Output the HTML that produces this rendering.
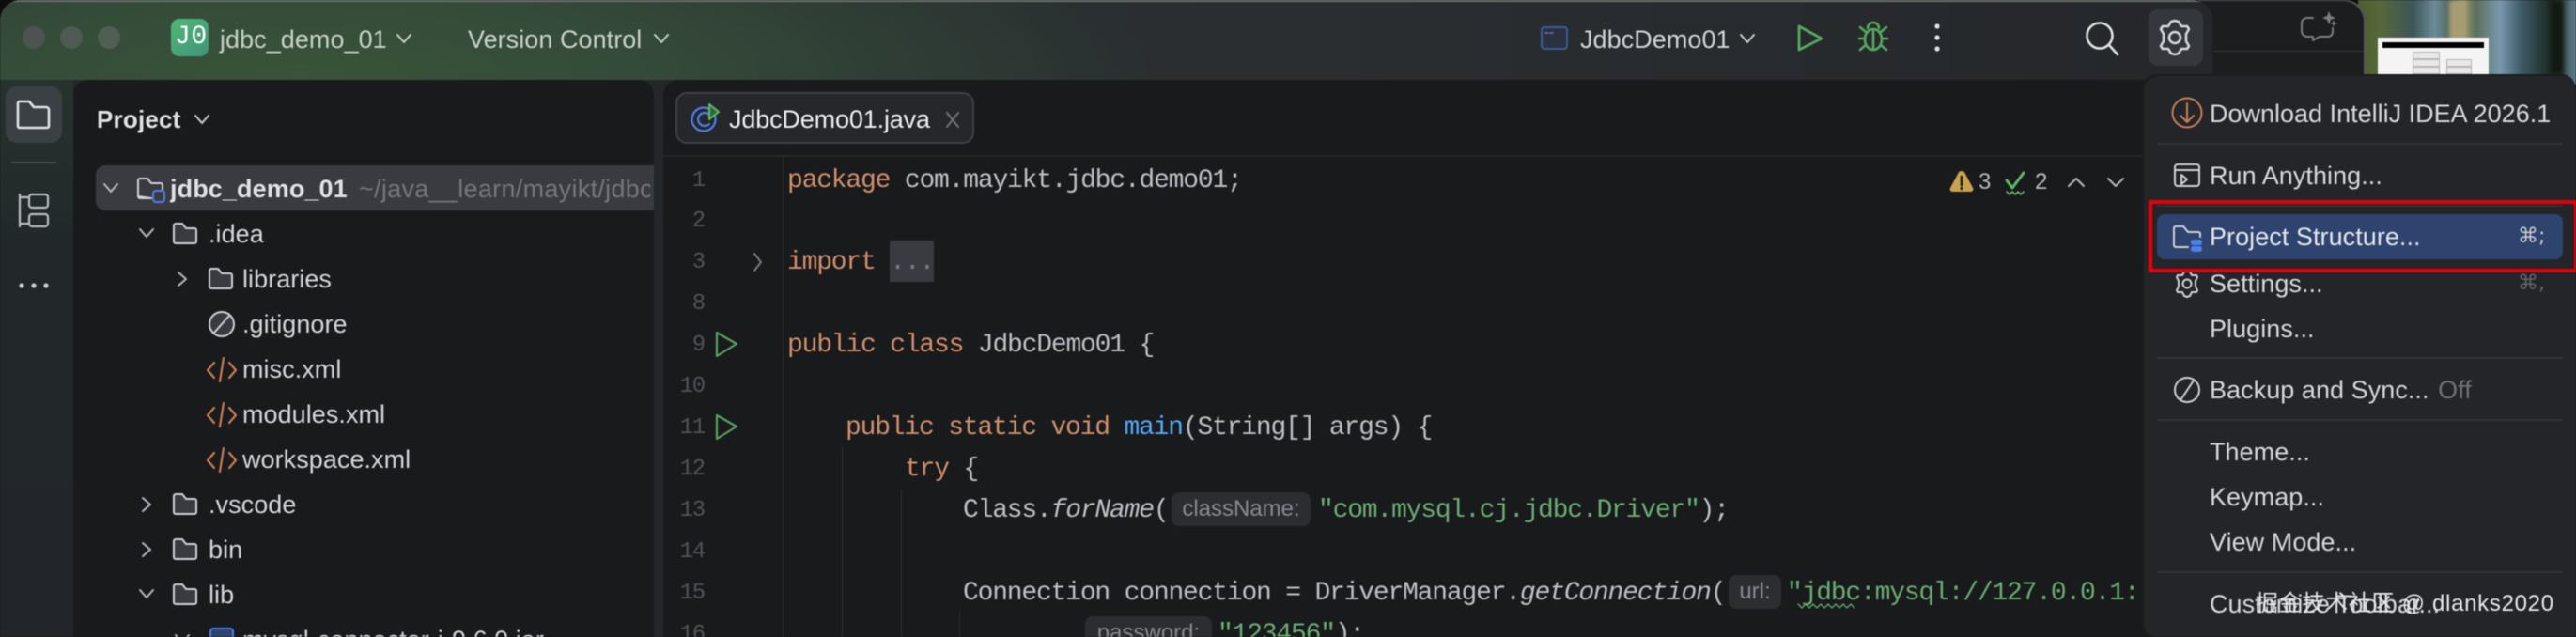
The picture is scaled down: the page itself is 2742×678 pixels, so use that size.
<!DOCTYPE html>
<html><head><meta charset="utf-8">
<style>
html,body{margin:0;padding:0;background:#0c0d0d;width:2742px;height:678px;overflow:hidden}
#r{position:relative;width:2742px;height:678px;overflow:hidden;filter:blur(.5px);font-family:"Liberation Sans","Noto Sans CJK SC",sans-serif}
#r div{position:absolute}
.t{white-space:nowrap;font-size:27px;line-height:40px;height:40px;letter-spacing:.05px;color:#d3d5da}
.m{white-space:pre;font-family:"Liberation Mono",monospace;font-size:28px;letter-spacing:-1.2px;line-height:40px;height:40px;color:#bcbec4;margin-top:1px}
.n{font-family:"Liberation Mono",monospace;font-size:24px;letter-spacing:-1.2px;line-height:40px;height:40px;color:#4f5257;width:60px;left:690px;text-align:right;margin-top:1px}
.k{color:#cf8e6d}.s{color:#6aab73}.f{color:#56a8f5}
.i{font-style:italic}
.h{background:#2b2d30;border-radius:8px;height:36px;color:#868a91;font-size:24px;line-height:36px;text-align:center;white-space:nowrap}
.sep{background:#303236;height:2px;left:2296px;width:432px}
svg{position:absolute;left:0;top:0}
</style></head><body><div id="r">
<!-- photo background -->
<div style="left:2510px;top:0;width:232px;height:90px;overflow:hidden;background:linear-gradient(90deg,#4d5c30 0,#56683a 10%,#3d5558 25%,#6d8a98 35%,#4f6a60 42%,#a09a70 48%,#5b6f5c 54%,#7a98ac 65%,#3f5a68 75%,#1d2b22 88%,#5d7c8c 100%)"></div>
<div style="left:2607px;top:0;width:18px;height:80px;background:#a89c72;filter:blur(2px)"></div>
<div style="left:2715px;top:0;width:14px;height:80px;background:#131a14;filter:blur(2px)"></div>
<!-- window behind -->
<div style="left:2340px;top:0;width:178px;height:90px;background:#1c1d1f;border-top-right-radius:22px;box-shadow:inset -2px 1px 0 #55575a"></div>
<div style="left:2356px;top:54px;width:160px;height:1px;background:#35373a"></div>
<!-- thumbnail -->
<div style="left:2531px;top:40px;width:118px;height:42px;background:#f4f4f4"></div>
<div style="left:2536px;top:45px;width:108px;height:6px;background:#000"></div>
<div style="left:2568px;top:55px;width:27px;height:6px;background:#e8e8e8;border:1px solid #b5b5b5"></div>
<div style="left:2568px;top:63px;width:27px;height:6px;background:#e8e8e8;border:1px solid #b5b5b5"></div>
<div style="left:2604px;top:63px;width:25px;height:6px;background:#e8e8e8;border:1px solid #b5b5b5"></div>
<div style="left:2568px;top:71px;width:27px;height:6px;background:#e8e8e8;border:1px solid #b5b5b5"></div>
<div style="left:2604px;top:71px;width:25px;height:6px;background:#e8e8e8;border:1px solid #b5b5b5"></div>
<!-- IDE window -->
<div style="left:0;top:0;width:2355px;height:678px;border-radius:22px 22px 0 0;background:#24272a;overflow:hidden;box-shadow:inset -2px 0 0 #46484b">
<div style="left:0;top:0;width:2355px;height:85px;background:radial-gradient(ellipse 900px 220px at 320px 80px,#395439 0,#354b39 40%,#2f3d35 72%,rgba(42,46,48,0) 100%),linear-gradient(90deg,#2a3331 0,#2a2e31 60%,#25272b 100%)"></div>
<div style="left:0;top:85px;width:78px;height:593px;background:linear-gradient(180deg,#27332e 0,#22282a 30%,#22262a 100%)"></div>
<div style="left:0;top:0;width:2355px;height:2px;background:#6b746d"></div>
</div>
<!-- traffic lights -->
<div style="left:24px;top:28px;width:24px;height:24px;border-radius:50%;background:#4c5351"></div>
<div style="left:64px;top:28px;width:24px;height:24px;border-radius:50%;background:#4e5a52"></div>
<div style="left:104px;top:28px;width:24px;height:24px;border-radius:50%;background:#4f5f54"></div>
<!-- project icon -->
<div style="left:182px;top:20px;width:40px;height:40px;border-radius:9px;background:linear-gradient(135deg,#52b678,#3f9478)"></div>
<div class="m" style="left:186px;top:19px;color:#fff;font-size:28px;letter-spacing:.6px;line-height:40px">J0</div>
<div class="t" style="left:234px;top:22px;color:#c6d0c7">jdbc_demo_01</div>
<div class="t" style="left:498px;top:22px;color:#c8d0c9">Version Control</div>
<div class="t" style="left:1682px;top:22px;color:#d0d2d6">JdbcDemo01</div>
<!-- left toolbar -->
<div style="left:6px;top:92px;width:60px;height:60px;border-radius:12px;background:#3b4044"></div>
<div style="left:12px;top:172px;width:48px;height:2px;background:#454a4c"></div>
<!-- project panel -->
<div style="left:78px;top:85px;width:618px;height:593px;background:#191a1c;border-radius:16px 16px 0 0;overflow:hidden">
<div style="left:24px;top:91px;width:594px;height:48px;background:#393b40;border-radius:10px 0 0 10px"></div>
</div>
<div class="t" style="left:103px;top:107px;font-weight:bold;font-size:26px;color:#dfe1e5;letter-spacing:.2px">Project</div>
<div style="left:181px;top:181px;width:511px;height:40px;overflow:hidden">
<div class="t" style="left:0;top:0;font-weight:bold;color:#dfe1e5;letter-spacing:.1px">jdbc_demo_01</div>
<div class="t" style="left:201px;top:0;color:#73767c;letter-spacing:.3px">~/java__learn/mayikt/jdbc_demo_01</div>
</div>
<div class="t" style="left:222px;top:229px">.idea</div>
<div class="t" style="left:258px;top:277px">libraries</div>
<div class="t" style="left:258px;top:325px">.gitignore</div>
<div class="t" style="left:258px;top:373px">misc.xml</div>
<div class="t" style="left:258px;top:421px">modules.xml</div>
<div class="t" style="left:258px;top:469px">workspace.xml</div>
<div class="t" style="left:222px;top:517px">.vscode</div>
<div class="t" style="left:222px;top:565px">bin</div>
<div class="t" style="left:222px;top:613px">lib</div>
<div class="t" style="left:258px;top:661px">mysql-connector-j-9.6.0.jar</div>
<!-- editor panel -->
<div style="left:706px;top:85px;width:1600px;height:593px;background:#191a1c;border-radius:16px 16px 0 0"></div>
<div style="left:706px;top:165px;width:1574px;height:2px;background:#26282b"></div>
<div style="left:719px;top:98px;width:314px;height:51px;border:2px solid #3e4045;border-radius:12px;background:#25272b"></div>
<div class="t" style="left:776px;top:107px;color:#eceef2;letter-spacing:-.15px">JdbcDemo01.java</div>
<div style="left:833px;top:167px;width:1px;height:511px;background:#2c2e31"></div>
<div style="left:896px;top:476px;width:1px;height:202px;background:#2c2e31"></div>
<div style="left:959px;top:520px;width:1px;height:158px;background:#2c2e31"></div>
<div style="left:1021px;top:652px;width:1px;height:26px;background:#2c2e31"></div>
<!-- line numbers -->
<div class="n" style="top:172px">1</div><div class="n" style="top:215px">2</div><div class="n" style="top:259px">3</div><div class="n" style="top:303px">8</div><div class="n" style="top:347px">9</div><div class="n" style="top:391px">10</div><div class="n" style="top:435px">11</div><div class="n" style="top:479px">12</div><div class="n" style="top:523px">13</div><div class="n" style="top:567px">14</div><div class="n" style="top:611px">15</div><div class="n" style="top:655px">16</div>
<!-- code -->
<div class="m" style="left:838px;top:172px"><span class="k">package</span> com.mayikt.jdbc.demo01;</div>
<div style="left:947px;top:256px;width:47px;height:44px;background:#393b40"></div>
<div class="m" style="left:838px;top:259px"><span class="k">import</span> <span style="color:#7a7e85">...</span></div>
<div class="m" style="left:838px;top:347px"><span class="k">public class</span> JdbcDemo01 {</div>
<div class="m" style="left:900px;top:435px"><span class="k">public static void</span> <span class="f">main</span>(String[] args) {</div>
<div class="m" style="left:963px;top:479px"><span class="k">try</span> {</div>
<div class="m" style="left:1025px;top:523px">Class.<span class="i">forName</span>(</div>
<div class="h" style="left:1247px;top:524px;width:148px">className:</div>
<div class="m s" style="left:1403px;top:523px">"com.mysql.cj.jdbc.Driver"<span style="color:#bcbec4">);</span></div>
<div class="m" style="left:1025px;top:611px">Connection connection = DriverManager.<span class="i">getConnection</span>(</div>
<div class="h" style="left:1840px;top:612px;width:56px">url:</div>
<div style="left:1902px;top:611px;width:373px;height:42px;overflow:hidden"><div class="m s" style="left:0;top:0">"jdbc:mysql://127.0.0.1:3306/</div></div>
<div class="h" style="left:1155px;top:656px;width:135px">password:</div>
<div class="m s" style="left:1296px;top:655px">"123456"<span style="color:#bcbec4">);</span></div>
<div class="t" style="left:2106px;top:174px;font-size:24px;color:#b4b6bb">3</div>
<div class="t" style="left:2166px;top:174px;font-size:24px;color:#b4b6bb">2</div>
<!-- base icons -->
<svg width="2742" height="678" viewBox="0 0 2742 678" fill="none" stroke-linecap="round" stroke-linejoin="round">
<defs>
<path id="fo" d="M2 4a2 2 0 0 1 2-2h7l4 5h9a2 2 0 0 1 2 2v12a2 2 0 0 1-2 2H4a2 2 0 0 1-2-2z" fill="#393b40" stroke="#ced0d6" stroke-width="2"/>
<path id="xm" d="M7 6L0 14l7 8M23 6l7 8-7 8M17 1l-4 25" stroke="#c77d55" stroke-width="2.2"/>
<path id="cd" d="M0 0l7 8 7-8" stroke="#b4b8bf" stroke-width="2"/>
<path id="cr" d="M0 0l8 7-8 7" stroke="#b4b8bf" stroke-width="2"/>
</defs>
<!-- chevrons top -->
<path d="M423 37l7 8 7-8M697 37l7 8 7-8M1853 37l7 8 7-8M208 123l7 8 7-8" stroke="#c6cec7" stroke-width="2"/>
<!-- toolbar icons -->
<path d="M20 110a2 2 0 0 1 2-2h10l5 6h13a3 3 0 0 1 3 3v17a2 2 0 0 1-2 2H22a2 2 0 0 1-2-2z" stroke="#dfe1e5" stroke-width="2.6" transform="translate(-1 0)"/>
<path d="M21 207v34M21 210h9M21 238h9" stroke="#b9bcc1" stroke-width="2.2"/>
<rect x="31" y="207" width="20" height="14" rx="3" stroke="#b9bcc1" stroke-width="2.2"/><rect x="31" y="228" width="20" height="13" rx="3" stroke="#b9bcc1" stroke-width="2.2"/>
<circle cx="23" cy="304" r="2.6" fill="#c6c9ce"/><circle cx="36" cy="304" r="2.6" fill="#c6c9ce"/><circle cx="49" cy="304" r="2.6" fill="#c6c9ce"/>
<!-- tree -->
<use href="#cd" x="111" y="196"/>
<path d="M147 192a2 2 0 0 1 2-2h8l4 5h10a2 2 0 0 1 2 2v5M161 211h-12a2 2 0 0 1-2-2z" stroke="#ced0d6" stroke-width="2"/>
<path d="M147 192v17" stroke="#ced0d6" stroke-width="2"/>
<rect x="163" y="203" width="12" height="12" rx="3" stroke="#4e7fe8" stroke-width="2"/>
<use href="#cd" x="149" y="244"/>
<use href="#fo" x="183" y="236"/>
<use href="#cr" x="190" y="290"/>
<use href="#fo" x="221" y="284"/>
<circle cx="236" cy="345" r="13" fill="#393b40" stroke="#ced0d6" stroke-width="2"/><path d="M228 354l16-18" stroke="#ced0d6" stroke-width="2"/>
<use href="#xm" x="221" y="380"/><use href="#xm" x="221" y="428"/><use href="#xm" x="221" y="476"/>
<use href="#cr" x="152" y="530"/><use href="#fo" x="183" y="524"/>
<use href="#cr" x="152" y="578"/><use href="#fo" x="183" y="572"/>
<use href="#cd" x="149" y="628"/><use href="#fo" x="183" y="620"/>
<use href="#cd" x="187" y="676"/>
<rect x="224" y="669" width="24" height="14" rx="3" stroke="#4e7fe8" stroke-width="2" fill="#2e436e"/>
<!-- tab icon -->
<circle cx="749" cy="127" r="12.5" stroke="#4e7fe8" stroke-width="2.2"/><path d="M755 122a7 7 0 1 0 0 10" stroke="#4e7fe8" stroke-width="2.2"/>
<path d="M755 111l10 8-10 8z" fill="#2e6a3a" stroke="#5fb865" stroke-width="2"/>
<path d="M1008 120l12 15M1020 120l-12 15" stroke="#6e7177" stroke-width="2"/>
<!-- fold, run -->
<path d="M803 270l7 9-7 9" stroke="#777a80" stroke-width="2"/>
<path d="M763 354l21 12-21 13z" stroke="#57a05e" stroke-width="2.2"/>
<path d="M763 442l21 12-21 13z" stroke="#57a05e" stroke-width="2.2"/>
<!-- squiggle -->
<path d="M1914 643l4 4 4-4 4 4 4-4 4 4 4-4 4 4 4-4 4 4 4-4 4 4 4-4 4 4 4-4 4 4" stroke="#5d9c66" stroke-width="1.5"/>
<!-- run config -->
<rect x="1641" y="29" width="27" height="23" rx="3" stroke="#3f5b94" stroke-width="2" fill="#2a3140"/><path d="M1645 35h3M1650 35h3" stroke="#5e7ab0" stroke-width="1.6"/>
<path d="M1915 28l24 13-24 12z" stroke="#57a85f" stroke-width="2.8"/>
<g stroke="#57a85f" stroke-width="2.6"><ellipse cx="1994" cy="42" rx="9" ry="11"/><path d="M1988 30a6 6 0 0 1 12 0M1994 33v18M1980 29l6 5M2008 29l-6 5M1979 41h6M2003 41h6M1980 53l6-5M2008 53l-6-5"/></g>
<circle cx="2062" cy="28" r="2.6" fill="#dfe1e5"/><circle cx="2062" cy="40" r="2.6" fill="#dfe1e5"/><circle cx="2062" cy="52" r="2.6" fill="#dfe1e5"/>
<circle cx="2235" cy="38" r="13.5" stroke="#dfe1e5" stroke-width="2.6"/><path d="M2245 48l9 10" stroke="#dfe1e5" stroke-width="2.6"/>
<rect x="2287" y="10" width="58" height="60" rx="10" fill="#34373b"/>
<path d="M2315 22l4 1 3 5 6 0 2 3-3 5v8l3 5-2 3-6 0-3 5-4 1-4-1-3-5-6 0-2-3 3-5v-8l-3-5 2-3 6 0 3-5z" stroke="#d5d7dc" stroke-width="2.6"/><circle cx="2315" cy="40" r="6" stroke="#d5d7dc" stroke-width="2.6"/>
<!-- chat sparkle -->
<path d="M2462 19h-6a6 6 0 0 0-6 6v8a6 6 0 0 0 6 6h6v4l7-4h9a5 5 0 0 0 5-5v-4" stroke="#7a7c80" stroke-width="2"/>
<path d="M2479 12l2 5 5 2-5 2-2 5-2-5-5-2 5-2zM2484 21l1 3 3 1-3 1-1 3-1-3-3-1 3-1z" fill="#7a7c80"/>
<!-- inspections -->
<path d="M2088 182c2 0 3 1 4 3l8 15c1 2 0 4-3 4h-18c-3 0-4-2-3-4l8-15c1-2 2-3 4-3z" fill="#c9a24e"/><path d="M2088 188v9M2088 200v1" stroke="#191a1c" stroke-width="2.6"/>
<path d="M2136 192l6 8 12-16" stroke="#5fb865" stroke-width="3"/><path d="M2136 204l3 3 3-3 3 3 3-3 3 3 3-3" stroke="#5fb865" stroke-width="1.6"/>
<path d="M2202 198l8-8 8 8M2244 190l8 8 8-8" stroke="#b4b6bb" stroke-width="2"/>
</svg>
<!-- popup -->
<div style="left:2280px;top:79px;width:462px;height:599px;background:#232529;border-radius:16px 16px 0 16px;box-shadow:inset 2px 2px 0 #1a1b1d"></div>
<div class="sep" style="top:152px"></div><div class="sep" style="top:218px"></div><div class="sep" style="top:380px"></div><div class="sep" style="top:446px"></div><div class="sep" style="top:608px"></div>
<div style="left:2296px;top:228px;width:432px;height:48px;border-radius:8px;background:#2e436e"></div>
<div class="t" style="left:2352px;top:101px;color:#d5d7db;letter-spacing:0">Download IntelliJ IDEA 2026.1</div>
<div class="t" style="left:2352px;top:167px;color:#d5d7db">Run Anything...</div>
<div class="t" style="left:2352px;top:232px;color:#e2e5ea">Project Structure...</div>
<div class="t" style="left:2352px;top:282px;color:#d5d7db">Settings...</div>
<div class="t" style="left:2352px;top:330px;color:#d5d7db">Plugins...</div>
<div class="t" style="left:2352px;top:395px;color:#d5d7db">Backup and Sync... <span style="color:#6e7177;margin-left:2px">Off</span></div>
<div class="t" style="left:2352px;top:461px;color:#d5d7db">Theme...</div>
<div class="t" style="left:2352px;top:509px;color:#d5d7db">Keymap...</div>
<div class="t" style="left:2352px;top:557px;color:#d5d7db">View Mode...</div>
<div class="t" style="left:2352px;top:623px;color:#d5d7db">Customize Toolbar...</div>
<div class="t" style="left:2401px;top:623px;color:#e8e8e8;font-size:24px;letter-spacing:.7px">掘金技术社区 @ dlanks2020</div>
<div class="t" style="left:2680px;top:232px;color:#c8cbd2;font-family:'DejaVu Sans',sans-serif;font-size:22px;letter-spacing:0">⌘;</div>
<div class="t" style="left:2680px;top:282px;color:#63666c;font-family:'DejaVu Sans',sans-serif;font-size:22px;letter-spacing:0">⌘,</div>
<svg width="2742" height="678" viewBox="0 0 2742 678" fill="none" stroke-linecap="round" stroke-linejoin="round">
<circle cx="2328" cy="120" r="15.5" stroke="#c77d55" stroke-width="2"/><path d="M2328 110v20M2321 123l7 7 7-7" stroke="#c77d55" stroke-width="2"/>
<rect x="2315" y="175" width="26" height="23" rx="3" stroke="#ced0d6" stroke-width="2"/><path d="M2315 181h26M2322 186l6 5-6 5z" stroke="#ced0d6" stroke-width="2"/>
<path d="M2329 263h-13a2 2 0 0 1-2-2v-18a2 2 0 0 1 2-2h8l5 6h11a2 2 0 0 1 2 2v3" stroke="#ced0d6" stroke-width="2"/>
<rect x="2332" y="255" width="12" height="6" rx="2.5" fill="#4e7fe8"/><rect x="2332" y="262" width="12" height="6" rx="2.5" fill="#4e7fe8"/>
<path d="M2328 288l3 1 2 4 5 0 1 2-2 4v6l2 4-1 2-5 0-2 4-3 1-3-1-2-4-5 0-1-2 2-4v-6l-2-4 1-2 5 0 2-4z" stroke="#ced0d6" stroke-width="2"/><circle cx="2328" cy="302" r="4.5" stroke="#ced0d6" stroke-width="2"/>
<circle cx="2328" cy="415" r="13" stroke="#ced0d6" stroke-width="2"/><path d="M2321 426l14-21" stroke="#ced0d6" stroke-width="2"/>
</svg>
<!-- red highlight -->
<div style="left:2287px;top:213px;width:455px;height:77px;box-sizing:border-box;border:4px solid #e3000b;border-right-width:2px"></div>
</div></body></html>
